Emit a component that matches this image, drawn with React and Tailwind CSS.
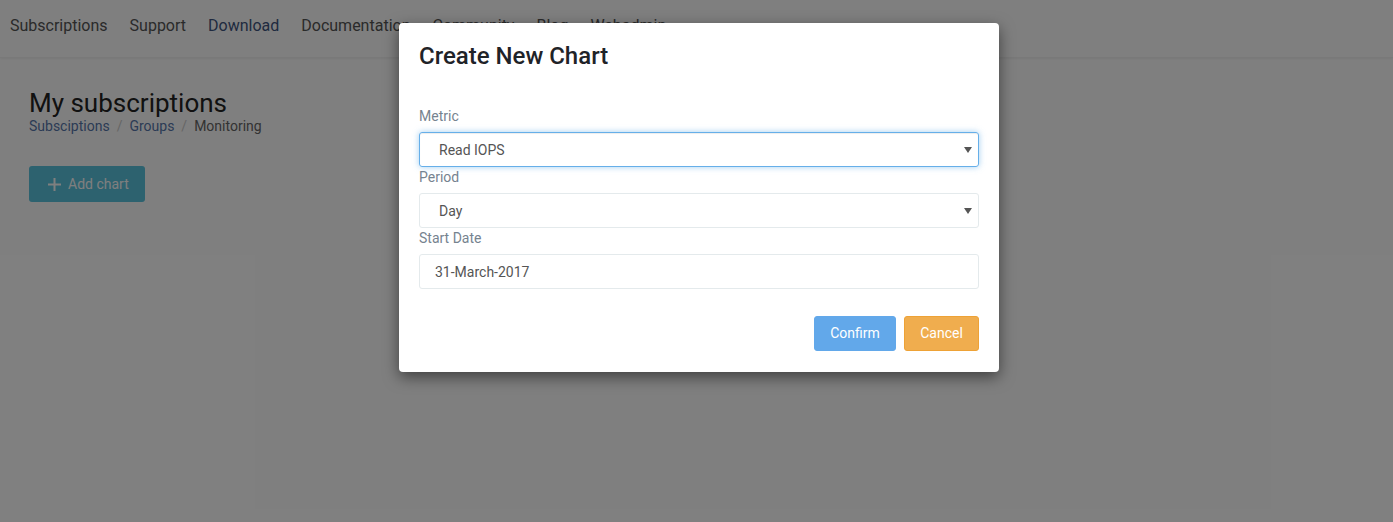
import React from "react";

function Caret() {
  return (
    <svg width="8" height="6" viewBox="0 0 8 6" className="absolute right-[6px] top-1/2 -translate-y-1/2">
      <path d="M0 0 L8 0 L4 6 Z" fill="#555" />
    </svg>
  );
}

export default function App() {
  const nav = ["Subscriptions", "Support", "Download", "Documentation", "Community", "Blog", "Webadmin"];
  return (
    <div className="relative w-[1393px] h-[522px] overflow-hidden bg-white" style={{ fontFamily: "Roboto, 'Liberation Sans', sans-serif" }}>
      {/* page */}
      <div className="h-[58px] border-b border-[#f2f2f2] shadow-[0_1px_2px_rgba(0,0,0,0.06)] flex items-start pt-[15px] pl-[10px] gap-[22px] text-[16px] leading-[22px] text-[#555]">
        {nav.map((n, i) => (
          <span key={n} className={i === 2 ? "text-[#3f5580]" : ""}>{n}</span>
        ))}
      </div>
      <div className="pl-[29px] pt-[31px]">
        <h1 className="text-[26px] leading-[28px] text-[#222]">My subscriptions</h1>
        <div className="flex items-center text-[14px] leading-[18px] text-[#666]">
          <span className="text-[#5777ab]">Subsciptions</span>
          <span className="px-[7px] text-[#ccc]">/</span>
          <span className="text-[#5777ab]">Groups</span>
          <span className="px-[7px] text-[#ccc]">/</span>
          <span>Monitoring</span>
        </div>
        <button className="mt-[31px] h-[36px] w-[116px] rounded-[3px] bg-[#5bc4de] text-white text-[14px] flex items-center pl-[19px] gap-[7px]">
          <svg width="13" height="13" viewBox="0 0 13 13"><path d="M6.5 0v13M0 6.5h13" stroke="white" strokeWidth="2" /></svg>
          <span>Add chart</span>
        </button>
      </div>

      {/* overlay */}
      <div className="absolute inset-0 bg-black/50 flex justify-center pl-[5px] pt-[23px]">
        <div className="w-[600px] h-[349px] bg-white rounded-[4px] shadow-[0_5px_15px_rgba(0,0,0,0.5)] px-[20px] pt-[20px]">
          <h2 className="text-[24px] leading-[26px] font-medium text-[#1f2328]">Create New Chart</h2>
          <div className="mt-[37px] text-[14px]">
            <div className="leading-[20px] text-[#76838f] mb-[6px]">Metric</div>
            <div className="relative h-[35px] rounded-[3px] border border-[#66afe9] shadow-[inset_0_1px_1px_rgba(0,0,0,0.075),0_0_6px_rgba(102,175,233,0.6)] flex items-center pl-[19px] pt-[2px] text-[#555]">
              Read IOPS
              <Caret />
            </div>
            <div className="leading-[20px] text-[#76838f] mb-[6px]">Period</div>
            <div className="relative h-[35px] rounded-[3px] border border-[#e4eaec] flex items-center pl-[19px] pt-[2px] text-[#555]">
              Day
              <Caret />
            </div>
            <div className="leading-[20px] text-[#76838f] mb-[6px]">Start Date</div>
            <div className="h-[35px] rounded-[3px] border border-[#e4eaec] flex items-center pl-[15px] pt-[2px] text-[#555]">
              31-March-2017
            </div>
            <div className="flex justify-end gap-[8px] mt-[27px]">
              <button className="h-[35px] w-[82px] rounded-[3px] bg-[#62a8ea] border border-[#62a8ea] text-white text-[14px]">Confirm</button>
              <button className="h-[35px] w-[75px] rounded-[3px] bg-[#f0ad4e] border border-[#eea236] text-white text-[14px]">Cancel</button>
            </div>
          </div>
        </div>
      </div>
    </div>
  );
}
